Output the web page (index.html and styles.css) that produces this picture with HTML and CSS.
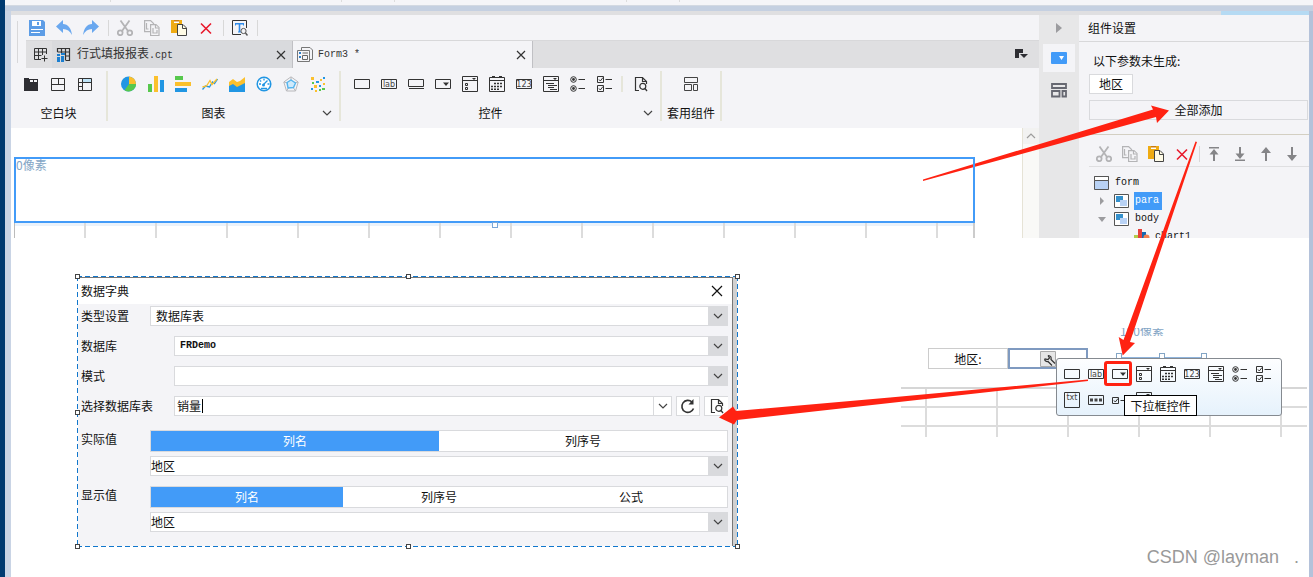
FILE: index.html
```html
<!DOCTYPE html>
<html lang="zh-CN">
<head>
<meta charset="utf-8">
<title>组件设置</title>
<link rel="stylesheet" href="styles.css">
</head>
<body>
<svg class="defs" aria-hidden="true">
  <symbol id="save" viewBox="0 0 16 16"><path fill="#5d9de6" d="M0 0h14l2 2v14H0z"/><path fill="#fff" d="M3 1h9v5H3zM2 9h12v1H2zM2 12h9v1H2z"/><path fill="#5d9de6" d="M8 2h2v3H8z"/></symbol>
  <symbol id="undo" viewBox="0 0 16 16"><path fill="#6aa8ef" d="M7 0v4c5 0 8 4 9 11-2-4-5-6-9-6v4L0 6.500z"/></symbol>
  <symbol id="redo" viewBox="0 0 16 16"><path fill="#6aa8ef" d="M9 0v4c-5 0-8 4-9 11 2-4 5-6 9-6v4l7-6.500z"/></symbol>
  <symbol id="cut" viewBox="0 0 16 16"><g fill="none" stroke="#b4b4b6" stroke-width="1.800"><path d="M3.500 0.500 11 11M12.500 0.500 5 11"/><circle cx="3.200" cy="12.800" r="2.400"/><circle cx="12.800" cy="12.800" r="2.400"/></g></symbol>
  <symbol id="copy" viewBox="0 0 16 16"><g fill="#f4f4f7" stroke="#b4b4b6" stroke-width="1.200"><path d="M.6.6h6l3 3v8h-9z"/><path d="M2.500 3v6h2"/><path d="M6.600 4.600h5.400l3 3v8H6.600z"/><path d="M11.500 5v3H15M9 8v5h4v-3"/></g></symbol>
  <symbol id="paste" viewBox="0 0 16 16"><path fill="#efab12" d="M0 0h11v13H0z"/><path fill="#fff" d="M3 0h5v3H3z"/><path fill="#c97b10" d="M3 0h5v1.500H3z"/><path fill="#fffbe6" stroke="#444" d="M6.500 4.500H12l3.500 3.500v7.500h-9z"/><path fill="none" stroke="#444" d="M11.500 5v3.500H15"/></symbol>
  <symbol id="del" viewBox="0 0 16 16"><path stroke="#e8192c" stroke-width="1.600" d="m3 3.500 10 10m0-10-10 10"/></symbol>
  <symbol id="find" viewBox="0 0 16 16"><path fill="none" stroke="#333" d="M9 14.500H.5V.5h14V8"/><path fill="#2f8bea" d="M3 3h9v2.500h-1V4.500H8.300v7H9v1H6v-1h.7v-7H4v1H3z"/><circle cx="11.500" cy="11" r="2.600" fill="#f4f4f7" stroke="#555"/><path stroke="#555" stroke-width="1.500" d="m13.500 13 2 2.500"/></symbol>
  <symbol id="gridplus" viewBox="0 0 16 16"><path fill="none" stroke="#333" d="M8 12.500H1.500v-11h12V7M1.500 5h12M1.500 8.500h7M5.500 1.500v11M9.500 1.500V8M11.500 8.500v6M8.500 11.500h6"/></symbol>
  <symbol id="sheet" viewBox="0 0 16 16"><path fill="none" stroke="#333" stroke-width="1.200" d="M1.500 5V1.500h12v12H10M1.500 5h12M5.500 1.500V6M9.500 1.500v12M9.500 9h4"/><path fill="#1c7fd0" d="M1 7h3v2H1zM1 10h3v5H1zM5 9h3v6H5zM5 6h4v2H5z"/></symbol>
  <symbol id="formdoc" viewBox="0 0 16 16"><path fill="#f4f4f7" stroke="#777" d="M4.500 12V.5H13l2.500 2.500v9.500h-11"/><path fill="#f4f4f7" stroke="#777" d="M.5 3.500h12v11H.5z"/><path fill="#2f7fc8" d="M2 5h2v2H2zM2 9h2v2H2z"/><path fill="none" stroke="#666" d="M5.500 6h5.500M5.500 8.500h5v4h-5z"/></symbol>
  <symbol id="b1" viewBox="0 0 16 16"><path fill="#2e2e33" d="M1 2h5v1h9v12H1z"/><path fill="#f4f4f7" d="M7 4h3v2H7zM11 4h3v2h-3z"/></symbol>
  <symbol id="b2" viewBox="0 0 16 16"><path fill="none" stroke="#333" d="M1.500 2.500h13v12h-13zM1.500 8.500h13M8.500 2.500v6"/></symbol>
  <symbol id="b3" viewBox="0 0 16 16"><path fill="#bfe4f8" d="M6 3h8v3H6z"/><path fill="none" stroke="#333" d="M1.500 2.500h13v12h-13zM1.500 6.500h13M1.500 10.500h4M5.500 2.500v12"/></symbol>
  <symbol id="pie" viewBox="0 0 16 16"><circle cx="7.500" cy="8" r="7.500" fill="#2196e3"/><path fill="#fbc02d" d="M8 8V.4A7.500 7.500 0 0 1 15 8z"/><path fill="#57c84d" d="M8 8h7a7.500 7.500 0 0 1-11.500 6.300z"/></symbol>
  <symbol id="bar" viewBox="0 0 16 16"><path fill="#57c84d" d="M0 8h4v8H0z"/><path fill="#fbc02d" d="M6 0h4v16H6z"/><path fill="#2196e3" d="M12 4h4v12h-4z"/></symbol>
  <symbol id="hbar" viewBox="0 0 16 16"><path fill="#57c84d" d="M0 0h8v4H0z"/><path fill="#fbc02d" d="M0 6h16v4H0z"/><path fill="#2196e3" d="M0 12h12v4H0z"/></symbol>
  <symbol id="line" viewBox="0 0 16 16"><g fill="none" stroke-width="1.300"><path stroke="#2196e3" d="m.5 13.500 3-3.500 4 1 3-5 2 1.500 3-4.500"/><path stroke="#fbc02d" d="m.5 11 4-1L8 4.500l2 4 5-5.500"/></g></symbol>
  <symbol id="area" viewBox="0 0 16 16"><path fill="#fbc02d" d="M0 6l4-3 4 3 3-1 5-4v14H0z"/><path fill="#2196e3" d="M0 10l4-2 4 3 8-4v9H0z"/></symbol>
  <symbol id="gauge" viewBox="0 0 16 16"><circle cx="8" cy="8" r="6.800" fill="#fff" stroke="#2196e3" stroke-width="1.500"/><path fill="none" stroke="#2196e3" stroke-width="1.300" d="M3 8h2M11.500 8h2M8 2.500v2M4 4.500l1.200 1M7 9l4.500-4.500M5 12.500h6"/><circle cx="7.500" cy="9" r="1.500" fill="#2196e3"/></symbol>
  <symbol id="radar" viewBox="0 0 16 16"><g fill="none"><path stroke="#b8b8bb" d="m8 .8 7.200 5.200-2.700 9h-9L.8 6zM8 1v7M1 6l7 2 7-2M3.500 15 8 8l4.500 7"/><path fill="#cfeafb" stroke="#56b5ee" stroke-width="1.400" d="m8 4 4.500 3-2 4.500L5 12 4 6.500z"/></g></symbol>
  <symbol id="dots" viewBox="0 0 16 16"><path fill="#fbc02d" d="M1 1h3v3H1zM10 3h2v2h-2zM4 9h3v3H4zM13 7h2v2h-2zM5 14h2v2H5z"/><path fill="#2196e3" d="M6 5h3v2H6zM13 1h2v2h-2zM1 12h2v2H1zM9 9h2v2H9z"/><path fill="#57c84d" d="M2 6h2v2H2zM12 12h3v2h-3zM9 13h2v2H9z"/></symbol>
  <symbol id="text" viewBox="0 0 16 16"><path fill="none" stroke="#333" d="M.5 3.500h15v9H.5z"/></symbol>
  <symbol id="button" viewBox="0 0 16 16"><path fill="none" stroke="#333" d="M.5 3.500h15v7H.5zM1 12.500h15"/></symbol>
  <symbol id="combo" viewBox="0 0 16 16"><path fill="none" stroke="#333" d="M.5 3.500h15v9H.5z"/><path fill="#333" d="M8 6.500h6L11 10z"/></symbol>
  <symbol id="tree" viewBox="0 0 16 16"><path fill="none" stroke="#333" d="M.5.5h15v15H.5zM.5 4.500h15M3.500 7.500h2v2h-2zM3.500 11.500h2v2h-2z"/><path fill="#333" d="M10 2h4l-2 2z"/></symbol>
  <symbol id="date" viewBox="0 0 16 16"><path fill="none" stroke="#333" d="M.5 1.500h15v14H.5zM.5 4.500h15"/><path stroke="#333" stroke-width="2" d="M3 1h3M10 1h3"/><path stroke="#333" stroke-width="1.600" stroke-dasharray="2 1" d="M5 7.500h9M2 10.500h12M2 13.300h9"/></symbol>
  <symbol id="list" viewBox="0 0 16 16"><path fill="none" stroke="#333" d="M.5.5h15v15H.5zM.5 4.500h15M3 7.500h8M5 9.500h9M5 11.500h6M7 13.500h7"/><path fill="#333" d="M10 2h4l-2 2z"/></symbol>
  <symbol id="radio" viewBox="0 0 16 16"><g fill="none" stroke="#333"><circle cx="3.500" cy="3.500" r="2.800"/><circle cx="3.500" cy="12.500" r="2.800"/><path d="M8.500 3.500H15M8.500 12.500H15"/></g><circle cx="3.500" cy="3.500" r="1.400" fill="#333"/><circle cx="3.500" cy="12.500" r="1.400" fill="#333"/></symbol>
  <symbol id="check" viewBox="0 0 16 16"><path fill="none" stroke="#333" d="M.5.500h6v6h-6zM.5 9.500h6v6h-6zM8.500 3.500H15M8.500 12.500H15M2 3.500 3.300 5 6 1.500M2 12.500 3.300 14 6 10.500"/></symbol>
  <symbol id="preview" viewBox="0 0 16 16"><path fill="none" stroke="#333" stroke-width="1.200" d="M6 14.500H2.500v-13h7l4 4V8M9.500 1.500v4h4"/><circle cx="9.800" cy="10.300" r="3" fill="none" stroke="#333" stroke-width="1.200"/><path stroke="#333" stroke-width="1.300" d="m12 12.500 2 2.500"/></symbol>
  <symbol id="layout" viewBox="0 0 16 16"><path fill="none" stroke="#444" d="M1.500 1.500h13v5h-13zM1.500 8.500h7v6h-7zM10.500 8.500h4v6h-4z"/></symbol>
  <symbol id="layout2" viewBox="0 0 16 16"><path fill="none" stroke="#666871" stroke-width="1.800" d="M1 2h14v4H1zM1 9h7.500v5.500H1zM11.500 9H15v5.500h-3.500z"/></symbol>
  <symbol id="blue" viewBox="0 0 16 16"><rect y="2" width="16" height="12" rx="1" fill="#429bf8"/><path fill="#fff" d="M8 6h5l-2.500 4z"/></symbol>
  <symbol id="chev" viewBox="0 0 16 16"><path fill="none" stroke="#444" stroke-width="1.200" d="m4 6 4 4 4-4"/></symbol>
  <symbol id="close" viewBox="0 0 16 16"><path stroke="#333" stroke-width="1.200" d="m4 4 8 8m0-8-8 8"/></symbol>
  <symbol id="closebig" viewBox="0 0 16 16"><path stroke="#111" stroke-width="1.200" d="m3 3 10 10M13 3 3 13"/></symbol>
  <symbol id="tabs" viewBox="0 0 16 16"><path fill="#2e2e33" d="M1 2h8v4H5v5H1z"/><path fill="#2e2e33" d="M6 7h8l-4 4z"/></symbol>
  <symbol id="top" viewBox="0 0 16 16"><path fill="#858588" d="M3 1h10v1.500H3zM8 3l4.500 5.500H9V15H7V8.500H3.500z"/></symbol>
  <symbol id="bottom" viewBox="0 0 16 16"><path fill="#858588" d="M3 13.500h10V15H3zM8 13l4.500-5.500H9V1H7v6.500H3.500z"/></symbol>
  <symbol id="up" viewBox="0 0 16 16"><path fill="#858588" d="m8 1 5 6H9v8H7V7H3z"/></symbol>
  <symbol id="down" viewBox="0 0 16 16"><path fill="#858588" d="m8 15 5-6H9V1H7v8H3z"/></symbol>
  <symbol id="formnode" viewBox="0 0 16 16"><path fill="#b9d2f5" stroke="#555" d="M.5 1.500h14v13H.5z"/><path fill="#fff" stroke="#555" d="M.5 1.500h14v4H.5z"/></symbol>
  <symbol id="block" viewBox="0 0 16 16"><path fill="#fff" stroke="#555" d="M.5 1.500h14v13H.5z"/><path fill="#3490cc" d="M2 3h7v6H2z"/><path fill="#b9d2f5" d="M6 7h7v6H6z"/></symbol>
  <symbol id="chartnode" viewBox="0 0 16 16"><path fill="#b4cc4a" d="M0 6h4v10H0z"/><path fill="#e8413c" d="M4 0h4v16H4z"/><path fill="#1569b2" d="M8 3h4v13H8z"/><circle cx="12.500" cy="8.500" r="3" fill="#f08050"/></symbol>
  <symbol id="right" viewBox="0 0 16 16"><path fill="#9c9c9f" d="m5 3 6 5-6 5z"/></symbol>
  <symbol id="closed" viewBox="0 0 16 16"><path fill="#9c9c9f" d="m6 4 4 4-4 4z"/></symbol>
  <symbol id="open" viewBox="0 0 16 16"><path fill="#9c9c9f" d="M4 6h8l-4 5z"/></symbol>
  <symbol id="reload" viewBox="0 0 16 16"><path fill="none" stroke="#333" stroke-width="1.600" d="M13.500 10.500A6 6 0 1 1 12 4"/><path fill="#333" d="M13.500 1v5.500H8.500z"/></symbol>
  <symbol id="pwd" viewBox="0 0 16 16"><path fill="none" stroke="#333" d="M.5 3.500h15v9H.5z"/><path stroke="#444" stroke-width="3" stroke-dasharray="3 1.500" d="M2 8h12"/></symbol>
  <symbol id="onecheck" viewBox="0 0 16 16"><path fill="none" stroke="#333" d="M.5 5.500h6v6h-6zM8.500 8.500H15M2 8.500 3.300 10 6 6.500"/></symbol>
  <symbol id="wrench" viewBox="0 0 16 16"><path fill="#e6e6e6" stroke="#aaa" d="M.5.500h15v15H.5z"/><path fill="none" stroke="#333" stroke-width="1.200" d="M8 4.500 9.500 7 8 8.500 5 8c-1 1 1 3 3 2.500l4 4M8 4.500c3 0 3.500 2 3 4l4 4"/></symbol>
</svg>

<div class="outer-top"><i></i><i></i><i></i><i></i><i></i></div>
<div class="frame">
  <div class="window">
    <div class="title-edge"><i></i></div>
    <div class="app">
      <main class="editor">
        <header class="head">
          <div class="grip"></div>
          <div class="head-main">
            <div class="toolbar">
              <div class="tools"><button aria-label="保存"><svg><use href="#save"/></svg></button><button aria-label="撤销"><svg><use href="#undo"/></svg></button><button aria-label="重做"><svg><use href="#redo"/></svg></button></div>
              <i class="sep"></i>
              <div class="tools"><button aria-label="剪切"><svg><use href="#cut"/></svg></button><button aria-label="复制"><svg><use href="#copy"/></svg></button><button aria-label="粘贴"><svg><use href="#paste"/></svg></button><button aria-label="删除"><svg><use href="#del"/></svg></button></div>
              <i class="sep"></i>
              <button aria-label="查找"><svg><use href="#find"/></svg></button>
              <i class="sep"></i>
            </div>
            <nav class="tabs">
              <button class="new-tab" aria-label="新建"><svg><use href="#gridplus"/></svg></button>
              <div class="tab"><svg><use href="#sheet"/></svg><span class="name">行式填报报表<span class="mono">.cpt</span></span><button aria-label="关闭"><svg><use href="#close"/></svg></button></div>
              <div class="tab active"><svg><use href="#formdoc"/></svg><span class="name mono">Form3 *</span><button aria-label="关闭"><svg><use href="#close"/></svg></button></div>
              <button class="tab-list" aria-label="标签列表"><svg><use href="#tabs"/></svg></button>
            </nav>
          </div>
        </header>
        <section class="ribbon">
          <div class="group blank"><div class="icons"><svg><use href="#b1"/></svg><svg><use href="#b2"/></svg><svg><use href="#b3"/></svg></div><div class="caption"><span>空白块</span></div></div>
          <div class="group charts"><div class="icons"><svg><use href="#pie"/></svg><svg><use href="#bar"/></svg><svg><use href="#hbar"/></svg><svg><use href="#line"/></svg><svg><use href="#area"/></svg><svg><use href="#gauge"/></svg><svg><use href="#radar"/></svg><svg><use href="#dots"/></svg></div><div class="caption"><span>图表</span><svg><use href="#chev"/></svg></div></div>
          <div class="group widgets"><div class="icons"><svg><use href="#text"/></svg><svg viewBox="0 0 16 16"><use href="#text"/><text class="tiny" x="8" y="11" text-anchor="middle">lab</text></svg><svg><use href="#button"/></svg><svg><use href="#combo"/></svg><svg><use href="#tree"/></svg><svg><use href="#date"/></svg><svg viewBox="0 0 16 16"><use href="#text"/><text class="tiny" x="8" y="11" text-anchor="middle">123</text></svg><svg><use href="#list"/></svg><svg><use href="#radio"/></svg><svg><use href="#check"/></svg><span class="divided"><svg><use href="#preview"/></svg></span></div><div class="caption"><span>控件</span><svg><use href="#chev"/></svg></div></div>
          <div class="group reuse"><div class="icons"><svg><use href="#layout"/></svg></div><div class="caption"><span>套用组件</span></div></div>
        </section>
        <section class="canvas">
          <div class="sheet">
            <div class="para-box">0像素<i class="handle"></i></div>
            <div class="columns"></div>
          </div>
          <div class="scroll"><button aria-label="向上"><svg><use href="#chev"/></svg></button></div>
        </section>
      </main>
      <nav class="rail">
        <button aria-label="收起"><svg><use href="#right"/></svg></button>
        <button class="on" aria-label="控件设置"><svg><use href="#blue"/></svg></button>
        <button aria-label="组件"><svg><use href="#layout2"/></svg></button>
      </nav>
      <aside class="panel">
        <h2>组件设置</h2>
        <div class="params">
          <p>以下参数未生成:</p>
          <span class="chip">地区</span>
          <button class="add-all">全部添加</button>
        </div>
        <div class="structure">
          <div class="tools"><button aria-label="剪切"><svg><use href="#cut"/></svg></button><button aria-label="复制"><svg><use href="#copy"/></svg></button><button aria-label="粘贴"><svg><use href="#paste"/></svg></button><button aria-label="删除"><svg><use href="#del"/></svg></button><button class="divided" aria-label="置顶"><svg><use href="#top"/></svg></button><button aria-label="置底"><svg><use href="#bottom"/></svg></button><button aria-label="上移"><svg><use href="#up"/></svg></button><button aria-label="下移"><svg><use href="#down"/></svg></button></div>
          <ul class="tree mono">
            <li><svg><use href="#formnode"/></svg><span>form</span></li>
            <li><svg><use href="#closed"/></svg><svg><use href="#block"/></svg><span class="picked">para</span></li>
            <li><svg><use href="#open"/></svg><svg><use href="#block"/></svg><span>body</span></li>
            <li class="deep"><svg><use href="#chartnode"/></svg><span>chart1</span></li>
          </ul>
        </div>
      </aside>
    </div>

    <div class="lower">
      <section class="snip">
        <form class="dialog">
          <div class="dialog-title"><span>数据字典</span><button type="button" aria-label="关闭"><svg><use href="#closebig"/></svg></button></div>
          <div class="fields">
            <div class="row"><label for="type">类型设置</label><div class="select"><select id="type"><option>数据库表</option></select><svg><use href="#chev"/></svg></div></div>
            <div class="row wide"><label for="db">数据库</label><div class="select"><select id="db" class="mono strong"><option>FRDemo</option></select><svg><use href="#chev"/></svg></div></div>
            <div class="row wide"><label for="schema">模式</label><div class="select"><select id="schema"><option></option></select><svg><use href="#chev"/></svg></div></div>
            <div class="row wide"><label for="table">选择数据库表</label><div class="entry"><input id="table" value="销量"><i class="caret"></i><button type="button" aria-label="展开"><svg><use href="#chev"/></svg></button></div><button type="button" class="square" aria-label="刷新"><svg><use href="#reload"/></svg></button><button type="button" class="square last" aria-label="预览"><svg><use href="#preview"/></svg></button></div>
            <div class="row double"><label for="real">实际值</label><div class="stack"><div class="segments"><button type="button" class="on">列名</button><button type="button">列序号</button></div><div class="select flush"><select id="real"><option>地区</option></select><svg><use href="#chev"/></svg></div></div></div>
            <div class="row double"><label for="shown">显示值</label><div class="stack"><div class="segments"><button type="button" class="on">列名</button><button type="button">列序号</button><button type="button">公式</button></div><div class="select flush"><select id="shown"><option>地区</option></select><svg><use href="#chev"/></svg></div></div></div>
          </div>
        </form>
        <i class="grab tl"></i><i class="grab tc"></i><i class="grab tr"></i><i class="grab ml"></i><i class="grab bl"></i><i class="grab bc"></i><i class="grab br"></i>
      </section>
      <section class="sketch">
        <div class="above"><span>190像素</span></div>
        <div class="cells"><label for="area-field" class="cell">地区:</label><button type="button" id="area-field" class="cell chosen"><svg><use href="#wrench"/></svg></button></div>
        <div class="lines"></div>
        <div class="ghost"><i></i><i></i><i></i></div>
        <div class="popup">
          <div class="icons"><svg><use href="#text"/></svg><svg viewBox="0 0 16 16"><use href="#text"/><text class="tiny" x="8" y="11" text-anchor="middle">lab</text></svg><svg><use href="#combo"/></svg><svg><use href="#tree"/></svg><svg><use href="#date"/></svg><svg viewBox="0 0 16 16"><use href="#text"/><text class="tiny" x="8" y="11" text-anchor="middle">123</text></svg><svg><use href="#list"/></svg><svg><use href="#radio"/></svg><svg><use href="#check"/></svg></div>
          <div class="icons"><svg viewBox="0 0 16 16"><path fill="none" stroke="#333" d="M.5.500h15v15H.5z"/><text class="tiny" x="8" y="8" text-anchor="middle">txt</text></svg><svg><use href="#pwd"/></svg><svg><use href="#onecheck"/></svg><svg><use href="#tree"/></svg></div>
          <i class="mark"></i>
          <span class="tip">下拉框控件</span>
        </div>
        <div class="watermark">CSDN @layman &nbsp;&nbsp;.</div>
      </section>
    </div>
  </div>
</div>
<svg class="arrows" viewBox="0 0 1313 577" aria-hidden="true"><g fill="#ff2212"><path d="M923 179.500 1153 109.500 1151 105.500 1169 110.500 1157 123 1156 117 923 181z"/><path d="M1195.500 141.500 1123.500 340 1118.700 337 1122.700 355.500 1135 343 1130 342 1197 142z"/><path d="M1088 379.500 890 397.500 736 411 733 406.500 719 417.500 734 424.500 737 420 890 403 1088 381z"/></g></svg>
</body>
</html>
```
FILE: styles.css
```css
* { box-sizing: border-box; }
body {
  margin: 0;
  min-height: 100vh;
  display: flex;
  flex-direction: column;
  position: relative;
  background: #fff;
  color: #111;
  font: 12px/16px "Noto Sans CJK SC", sans-serif;
  overflow: hidden;
}
button, input, select { font: inherit; color: inherit; margin: 0; padding: 0; border: 0; background: none; border-radius: 0; }
button { display: flex; align-items: center; justify-content: center; }
svg { width: 16px; height: 16px; flex: none; display: block; }
.defs { position: absolute; width: 0; height: 0; }
.tiny { font: 8px "DejaVu Sans", sans-serif; fill: #444; }
.mono { font-family: "Liberation Mono", "Noto Sans CJK SC", monospace; font-size: 10px; }
.arrows { position: absolute; left: 0; top: 0; width: 1313px; height: 577px; pointer-events: none; }

.outer-top {
  height: 11px;
  display: flex;
  padding-left: 5px;
  background:
    linear-gradient(#003a70, #003a70) 0 0 / 5px 100% no-repeat,
    linear-gradient(#f5f5f8 5px, #d3d9e2 5px 6px, #c5d0e1 6px);
}
.outer-top i { height: 2px; border-right: 1px solid #ddd; width: 106px; }
.outer-top i:nth-child(2) { width: 231px; }
.outer-top i:nth-child(3) { width: 53px; }
.outer-top i:nth-child(4) { width: 232px; }
.outer-top i:nth-child(5) { width: 53px; }
.frame { flex: 1; display: flex; border-left: 5px solid #003a70; border-right: 4px solid #b4c2da; }
.window { flex: 1; min-width: 0; display: flex; flex-direction: column; border-left: 6px solid #c9d4e5; }
.title-edge { height: 4px; background: #dfdfe1; display: flex; justify-content: flex-end; }
.title-edge i { width: 88px; background: #b5daf3; }

.app { display: flex; height: 223px; background: #f4f4f7; }
.editor { flex: 1; min-width: 0; display: flex; flex-direction: column; }
.head { display: flex; }
.grip { width: 7px; margin: 6px 8px 5px 0; border-right: 1px solid #d8d8da; }
.head-main { flex: 1; }
.toolbar { height: 25px; padding-left: 3px; display: flex; align-items: center; gap: 8px; }
.tools { display: flex; gap: 11px; }
.sep { width: 1px; height: 16px; margin-left: 1px; background: #d8d8d8; }
.tabs { height: 28px; display: flex; background: #dfdfe1; border-top: 1px solid #d8d8da; }
.new-tab { width: 26px; padding-left: 4px; }
.tab { width: 241px; padding: 0 3px 0 4px; display: flex; align-items: center; gap: 5px; background: #d9dadd; border-right: 1px solid #c0c0c4; }
.tab .name { flex: 1; color: #333; }
.tab.active { width: 240px; background: #f4f4f7; }
.tab-list { margin-left: auto; width: 34px; }

.ribbon { height: 60px; display: flex; }
.group { height: 50px; margin-top: 3px; border-right: 2px solid #e6e6da; display: flex; flex-direction: column; justify-content: space-between; }
.icons { display: flex; gap: 11px; }
.ribbon .icons { padding: 5px 0 0 13px; }
.caption { display: flex; align-items: center; height: 16px; }
.caption span { flex: 1; text-align: center; }
.caption svg { margin-right: 4px; }
.blank { width: 97px; }
.ribbon .blank .icons { padding-left: 12px; }
.charts { width: 233px; }
.widgets { width: 321px; }
.reuse { width: 60px; }
.ribbon .reuse .icons { padding-left: 21px; }
.icons .divided { margin-left: -3px; padding-left: 10px; border-left: 2px solid #e6e6da; }

.canvas { flex: 1; display: flex; background: #fff; }
.sheet { flex: 1; padding: 29px 47px 0 3px; display: flex; flex-direction: column; }
.para-box { position: relative; height: 66px; border: 2px solid #429bf8; color: #83a5c5; line-height: 12px; z-index: 1; }
.handle { position: absolute; left: calc(50% - 3px); bottom: -7px; width: 6px; height: 6px; border: 1px solid #7aa7d8; background: #fff; }
.columns {
  flex: 1;
  border-left: 1px solid #bbb;
  border-right: 2px solid #ccc;
  background:
    repeating-linear-gradient(90deg, transparent 0 69px, #dcdcdc 69px 71px),
    linear-gradient(#eaf2fb 3px, transparent 3px);
}
.scroll { width: 17px; background: #f9f9f7; border-left: 1px solid #e6e3d6; }
.scroll button { width: 16px; height: 16px; background: #ececec; opacity: .5; transform: rotate(180deg); }
.rail { width: 40px; background: #e7e7e8; display: flex; flex-direction: column; align-items: center; gap: 4px; }
.rail button { width: 32px; height: 28px; }
.rail button:first-child { height: 25px; }
.rail .on { background: #f4f4f7; }

.panel { width: 230px; display: flex; flex-direction: column; overflow: hidden; }
.panel h2 { margin: 0; height: 27px; padding: 5px 9px; font-size: 12px; font-weight: 400; border-bottom: 1px solid #d8d8da; }
.params { margin-left: 10px; padding: 11px 1px 14px 0; border-bottom: 1px solid #d3cfc2; display: flex; flex-direction: column; align-items: flex-start; }
.params p { margin: 0 0 5px 4px; }
.chip { width: 44px; height: 20px; border: 1px solid #d9dadd; background: #fff; text-align: center; line-height: 18px; }
.add-all { align-self: stretch; margin-top: 6px; height: 20px; border: 1px solid #d9dadd; }
.structure { margin-left: 10px; }
.structure .tools { gap: 10px; padding: 11px 7px 4px; border-bottom: 1px solid #dfdfe1; }
.tools .divided { margin-left: -1px; padding-left: 6px; border-left: 1px solid #d8d8d8; }
.tree { margin: 0; padding: 7px 0 0 5px; list-style: none; }
.tree li { display: flex; align-items: center; height: 18px; gap: 4px; }
.tree li span { line-height: 18px; padding: 0 1px; }
.tree .picked { background: #429bf8; color: #fff; padding-right: 3px; }
.tree .deep { padding-left: 40px; }

.lower { flex: 1; display: flex; padding: 38px 2px 0 66px; gap: 163px; background: #fff; }
.snip {
  position: relative;
  flex: 1;
  height: 271px;
  padding: 1px 5px 1px 1px;
  background:
    repeating-linear-gradient(90deg, #1177cc 0 5px, #fff 5px 8px) 0 0 / 100% 1px no-repeat,
    repeating-linear-gradient(90deg, #1177cc 0 5px, #fff 5px 8px) 0 100% / 100% 1px no-repeat,
    repeating-linear-gradient(#1177cc 0 5px, #fff 5px 8px) 0 0 / 1px 100% no-repeat,
    repeating-linear-gradient(#1177cc 0 5px, #fff 5px 8px) 100% 0 / 1px 100% no-repeat,
    #d0d0d0;
}
.dialog { height: 100%; border-top: 1px solid #777; border-right: 1px solid #777; background: #f4f4f7; }
.dialog-title { height: 26px; padding: 0 7px 0 3px; display: flex; align-items: center; justify-content: space-between; background: #fff; }
.fields { padding: 2px 4px 0 3px; display: flex; flex-direction: column; gap: 10px; }
.row { display: grid; grid-template-columns: 69px 1fr; align-items: center; }
.row.wide { grid-template-columns: 93px 1fr auto auto; }
.select, .entry { position: relative; display: flex; height: 20px; border: 1px solid #d9dadd; background: #fff; }
.wide .select { grid-column: 2 / -1; }
.select select { flex: 1; appearance: none; padding: 0 25px 0 5px; }
.select.flush select { padding-left: 0; }
.select svg { position: absolute; right: -1px; top: -1px; width: 20px; height: 20px; padding: 2px; background: #d9dadd; pointer-events: none; }
.strong { font-weight: 700; }
.entry input { flex: 1; min-width: 0; padding-left: 2px; outline: 0; }
.entry button { width: 18px; border-left: 1px solid #d9dadd; }
.caret { position: absolute; left: 27px; top: 2px; width: 1px; height: 14px; background: #000; }
.square { width: 24px; height: 20px; margin-left: 4px; border: 1px solid #d9dadd; background: #fff; }
.square.last { border-right: 0; }
.double { align-items: start; margin-top: 4px; }
.double label { padding-top: 1px; }
.double + .double { margin-top: 0; }
.stack { display: flex; flex-direction: column; gap: 4px; }
.segments { display: flex; height: 22px; border: 1px solid #d9dadd; background: #fff; }
.segments button { flex: 1; }
.segments .on { background: #429bf8; color: #fff; }
.grab { position: absolute; width: 5px; height: 5px; border: 1px solid #444; background: #fff; }
.tl, .tc, .tr { top: -2px; }
.bl, .bc, .br { bottom: -2px; }
.tl, .ml, .bl { left: -2px; }
.tc, .bc { left: calc(50% - 2px); }
.tr, .br { right: -2px; }
.ml { top: calc(50% - 2px); }

.sketch { position: relative; width: 406px; padding-top: 52px; display: flex; flex-direction: column; }
.above { height: 8px; margin-left: 219px; overflow: hidden; display: flex; align-items: flex-end; color: #83a5c5; line-height: 10px; }
.cells { display: flex; margin: 12px 0 18px 27px; }
.cell { width: 80px; height: 21px; border: 1px solid #ccc; background: #fff; text-align: center; line-height: 19px; }
.chosen { border: 2px solid #7f9ac0; }
.lines {
  height: 50px;
  background:
    linear-gradient(#d6d6d6, #d6d6d6) 0 0 / 100% 2px no-repeat,
    linear-gradient(#dcdcdc, #dcdcdc) 0 19px / 100% 2px no-repeat,
    linear-gradient(#dcdcdc, #dcdcdc) 0 38px / 100% 2px no-repeat,
    repeating-linear-gradient(90deg, #dcdcdc 0 2px, transparent 2px 71px) 24px 0;
}
.ghost { position: absolute; left: 215px; top: 77px; width: 91px; height: 6px; display: flex; justify-content: space-between; border-bottom: 2px solid #8fb4dc; }
.ghost i { width: 6px; height: 6px; border: 1px solid #83a5c5; background: #fff; }
.popup {
  position: absolute;
  left: 155px;
  top: 82px;
  width: 226px;
  height: 58px;
  padding: 7px;
  display: flex;
  flex-direction: column;
  gap: 10px;
  border: 1px solid #858a90;
  border-radius: 3px;
  background: linear-gradient(#fdfeff, #e6f2fc);
}
.popup .icons { gap: 8px; }
.mark { position: absolute; left: 47px; top: 2px; width: 28px; height: 25px; border: 3px solid #ff2212; border-radius: 3px; }
.tip { position: absolute; left: 67px; top: 36px; width: 73px; height: 21px; border: 1px solid #000; background: #fff; text-align: center; line-height: 19px; }
.watermark { margin: auto 8px 10px auto; color: #999; font: 18px/20px "Liberation Sans", sans-serif; }
```
